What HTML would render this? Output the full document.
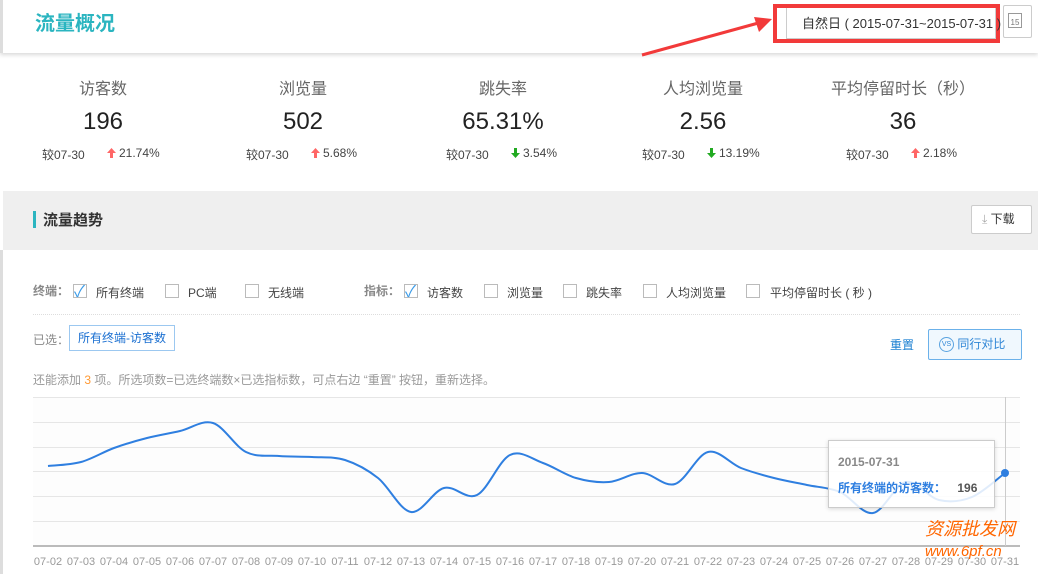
<!DOCTYPE html>
<html><head><meta charset="utf-8"><style>
*{margin:0;padding:0;box-sizing:border-box}
body{width:1038px;height:574px;overflow:hidden;background:#fff;font-family:"Liberation Sans","Noto Sans CJK SC",sans-serif;position:relative;color:#333}
.a{position:absolute;white-space:nowrap}
.cb{position:absolute;width:14px;height:14px;border:1px solid #bbb;background:#fff;top:284px}
.t12{font-size:12px;color:#444}
.lbl{font-size:16px;color:#666;width:200px;text-align:center}
.val{font-size:24px;color:#222;width:200px;text-align:center}
.ar{display:inline-block;vertical-align:-1px;margin-right:3px}
</style></head><body>
<div class="a" style="left:0;top:0;width:1038px;height:53px;background:#fff;box-shadow:0 2px 4px rgba(0,0,0,.15);border-left:3px solid #ddd"></div>
<div class="a" style="left:35px;top:7px;font-size:20px;font-weight:bold;color:#2bb5c0">流量概况</div>
<div class="a" style="left:786px;top:6px;width:210px;height:33px;border:1px solid #ccc;background:#fff"></div>
<div class="a" style="left:773px;top:4px;width:227px;height:39px;border:4px solid #f23a3a"></div>
<div class="a" style="left:802px;top:13px;font-size:13px;color:#333">自然日 ( 2015-07-31~2015-07-31 )</div>
<div class="a" style="left:1003px;top:5px;width:29px;height:33px;border:1px solid #ccc;border-radius:2px;background:#fff"></div>
<div class="a" style="left:1008px;top:13px;width:14px;height:15px;border:1px solid #999;font-size:8px;color:#777;text-align:center;line-height:17px">15</div>
<svg class="a" style="left:0;top:0" width="1038" height="80"><line x1="642" y1="55" x2="762" y2="22" stroke="#f23a3a" stroke-width="3"/><polygon points="772,19 754,17 759,32" fill="#f23a3a"/></svg>

<div class="a lbl" style="left:3px;top:75px">访客数</div>
<div class="a val" style="left:3px;top:108px">196</div>
<div class="a lbl" style="left:203px;top:75px">浏览量</div>
<div class="a val" style="left:203px;top:108px">502</div>
<div class="a lbl" style="left:403px;top:75px">跳失率</div>
<div class="a val" style="left:403px;top:108px">65.31%</div>
<div class="a lbl" style="left:603px;top:75px">人均浏览量</div>
<div class="a val" style="left:603px;top:108px">2.56</div>
<div class="a lbl" style="left:803px;top:75px">平均停留时长（秒）</div>
<div class="a val" style="left:803px;top:108px">36</div>

<div class="a t12" style="left:42px;top:146px">较07-30</div><div class="a t12" style="left:107px;top:146px"><svg class="ar" width="9" height="10"><path d="M4.5 0L9 5H6V10H3V5H0Z" fill="#f66"/></svg>21.74%</div>
<div class="a t12" style="left:246px;top:146px">较07-30</div><div class="a t12" style="left:311px;top:146px"><svg class="ar" width="9" height="10"><path d="M4.5 0L9 5H6V10H3V5H0Z" fill="#f66"/></svg>5.68%</div>
<div class="a t12" style="left:446px;top:146px">较07-30</div><div class="a t12" style="left:511px;top:146px"><svg class="ar" width="9" height="10"><path d="M4.5 10L9 5H6V0H3V5H0Z" fill="#2a2"/></svg>3.54%</div>
<div class="a t12" style="left:642px;top:146px">较07-30</div><div class="a t12" style="left:707px;top:146px"><svg class="ar" width="9" height="10"><path d="M4.5 10L9 5H6V0H3V5H0Z" fill="#2a2"/></svg>13.19%</div>
<div class="a t12" style="left:846px;top:146px">较07-30</div><div class="a t12" style="left:911px;top:146px"><svg class="ar" width="9" height="10"><path d="M4.5 0L9 5H6V10H3V5H0Z" fill="#f66"/></svg>2.18%</div>

<div class="a" style="left:3px;top:191px;width:1035px;height:59px;background:#efefef"></div>
<div class="a" style="left:33px;top:211px;width:3px;height:17px;background:#2bb5c0"></div>
<div class="a" style="left:43px;top:209px;font-size:15px;font-weight:bold;color:#333">流量趋势</div>
<div class="a" style="left:971px;top:205px;width:61px;height:29px;border:1px solid #ccc;background:#fff;border-radius:2px;font-size:12px;line-height:27px;padding-left:10px"><span style="color:#aaa">⤓</span> 下载</div>
<div class="a" style="left:0;top:250px;width:3px;height:324px;background:#ddd"></div>

<div class="a" style="left:33px;top:282px;font-size:12px;font-weight:bold;color:#888">终端：</div>
<div class="cb" style="left:73px"></div><div class="a" style="left:74px;top:278px;color:#3a9be8;font-size:16px">✓</div><div class="a t12" style="left:96px;top:284px">所有终端</div>
<div class="cb" style="left:165px"></div><div class="a t12" style="left:188px;top:284px">PC端</div>
<div class="cb" style="left:245px"></div><div class="a t12" style="left:268px;top:284px">无线端</div>
<div class="a" style="left:364px;top:282px;font-size:12px;font-weight:bold;color:#888">指标：</div>
<div class="cb" style="left:404px"></div><div class="a" style="left:405px;top:278px;color:#3a9be8;font-size:16px">✓</div><div class="a t12" style="left:427px;top:284px">访客数</div>
<div class="cb" style="left:484px"></div><div class="a t12" style="left:507px;top:284px">浏览量</div>
<div class="cb" style="left:563px"></div><div class="a t12" style="left:586px;top:284px">跳失率</div>
<div class="cb" style="left:643px"></div><div class="a t12" style="left:666px;top:284px">人均浏览量</div>
<div class="cb" style="left:746px"></div><div class="a t12" style="left:770px;top:284px">平均停留时长 ( 秒 )</div>
<div class="a" style="left:33px;top:314px;width:987px;border-top:1px dotted #ddd"></div>

<div class="a" style="left:33px;top:331px;font-size:12px;color:#888">已选：</div>
<div class="a" style="left:69px;top:325px;width:106px;height:26px;border:1px solid #9cc8f0;font-size:12px;color:#1a6fd1;line-height:24px;text-align:center">所有终端-访客数</div>
<div class="a" style="left:890px;top:336px;font-size:12px;color:#1a7fd1">重置</div>
<div class="a" style="left:928px;top:329px;width:94px;height:31px;border:1px solid #6bb1ea;background:#f0f8fe;border-radius:2px;font-size:12px;color:#2f86d6;line-height:29px;padding-left:10px"><span style="display:inline-block;width:15px;height:15px;border:1px solid #5aa3e0;border-radius:50%;font-size:7px;line-height:13px;text-align:center;vertical-align:middle">VS</span> 同行对比</div>
<div class="a" style="left:33px;top:371px;font-size:12px;color:#999">还能添加 <span style="color:#f93">3</span> 项。所选项数=已选终端数×已选指标数，可点右边 “重置” 按钮，重新选择。</div>

<svg class="a" style="left:0;top:390px" width="1038" height="184" id="ch">
<rect x="33" y="7" width="987" height="150" fill="#fdfdfd"/>
<g stroke="#e6e6e6" stroke-width="1">
<line x1="33" y1="7.5" x2="1020" y2="7.5"/><line x1="33" y1="32.5" x2="1020" y2="32.5"/><line x1="33" y1="57.5" x2="1020" y2="57.5"/><line x1="33" y1="81.5" x2="1020" y2="81.5"/><line x1="33" y1="106.5" x2="1020" y2="106.5"/><line x1="33" y1="131.5" x2="1020" y2="131.5"/>
</g>
<line x1="33" y1="156" x2="1020" y2="156" stroke="#bbb" stroke-width="2"/>
<line x1="1005.5" y1="7" x2="1005.5" y2="156" stroke="#ccc"/>
<path id="ln" fill="none" stroke="#2f7fe0" stroke-width="2"/>
<circle cx="1005" cy="83" r="4" fill="#2f7fe0"/>
<g id="xl" font-size="11" fill="#999" font-family="Liberation Sans,sans-serif"></g>
</svg>
<div class="a" style="left:828px;top:440px;width:167px;height:68px;border:1px solid #ccc;background:rgba(255,255,255,.85);box-shadow:0 1px 4px rgba(0,0,0,.15)"></div>
<div class="a" style="left:838px;top:455px;font-size:12px;font-weight:bold;color:#888">2015-07-31</div>
<div class="a" style="left:838px;top:479px;font-size:12px;font-weight:bold;color:#2f7fe0">所有终端的访客数： <span style="color:#555;margin-left:8px">196</span></div>
<div class="a" style="left:925px;top:515px;font-size:18px;color:#f60;font-style:italic">资源批发网</div>
<div class="a" style="left:925px;top:543px;font-size:15px;color:#f60;font-style:italic">www.6pf.cn</div>
<script>
var ys=[466,462,448,438,431,423,452,456,457,460,478,512,488,495,455,463,478,482,473,484,452,468,478,485,492,513,482,500,497,473];
var p=ys.map(function(y,i){return [48+33*i,y-390]});
var d="M"+p[0][0]+","+p[0][1];
for(var i=0;i<p.length-1;i++){var a=p[i-1]||p[i],b=p[i],c=p[i+1],e=p[i+2]||c;
d+=" C"+(b[0]+(c[0]-a[0])/6)+","+(b[1]+(c[1]-a[1])/6)+" "+(c[0]-(e[0]-b[0])/6)+","+(c[1]-(e[1]-b[1])/6)+" "+c[0]+","+c[1];}
document.getElementById("ln").setAttribute("d",d);
var g=document.getElementById("xl"),s="";
for(var i=0;i<30;i++){var n=i+2;s+='<text x="'+(48+33*i)+'" y="175" text-anchor="middle">07-'+(n<10?"0"+n:n)+'</text>';}
g.innerHTML=s;
</script>
</body></html>
